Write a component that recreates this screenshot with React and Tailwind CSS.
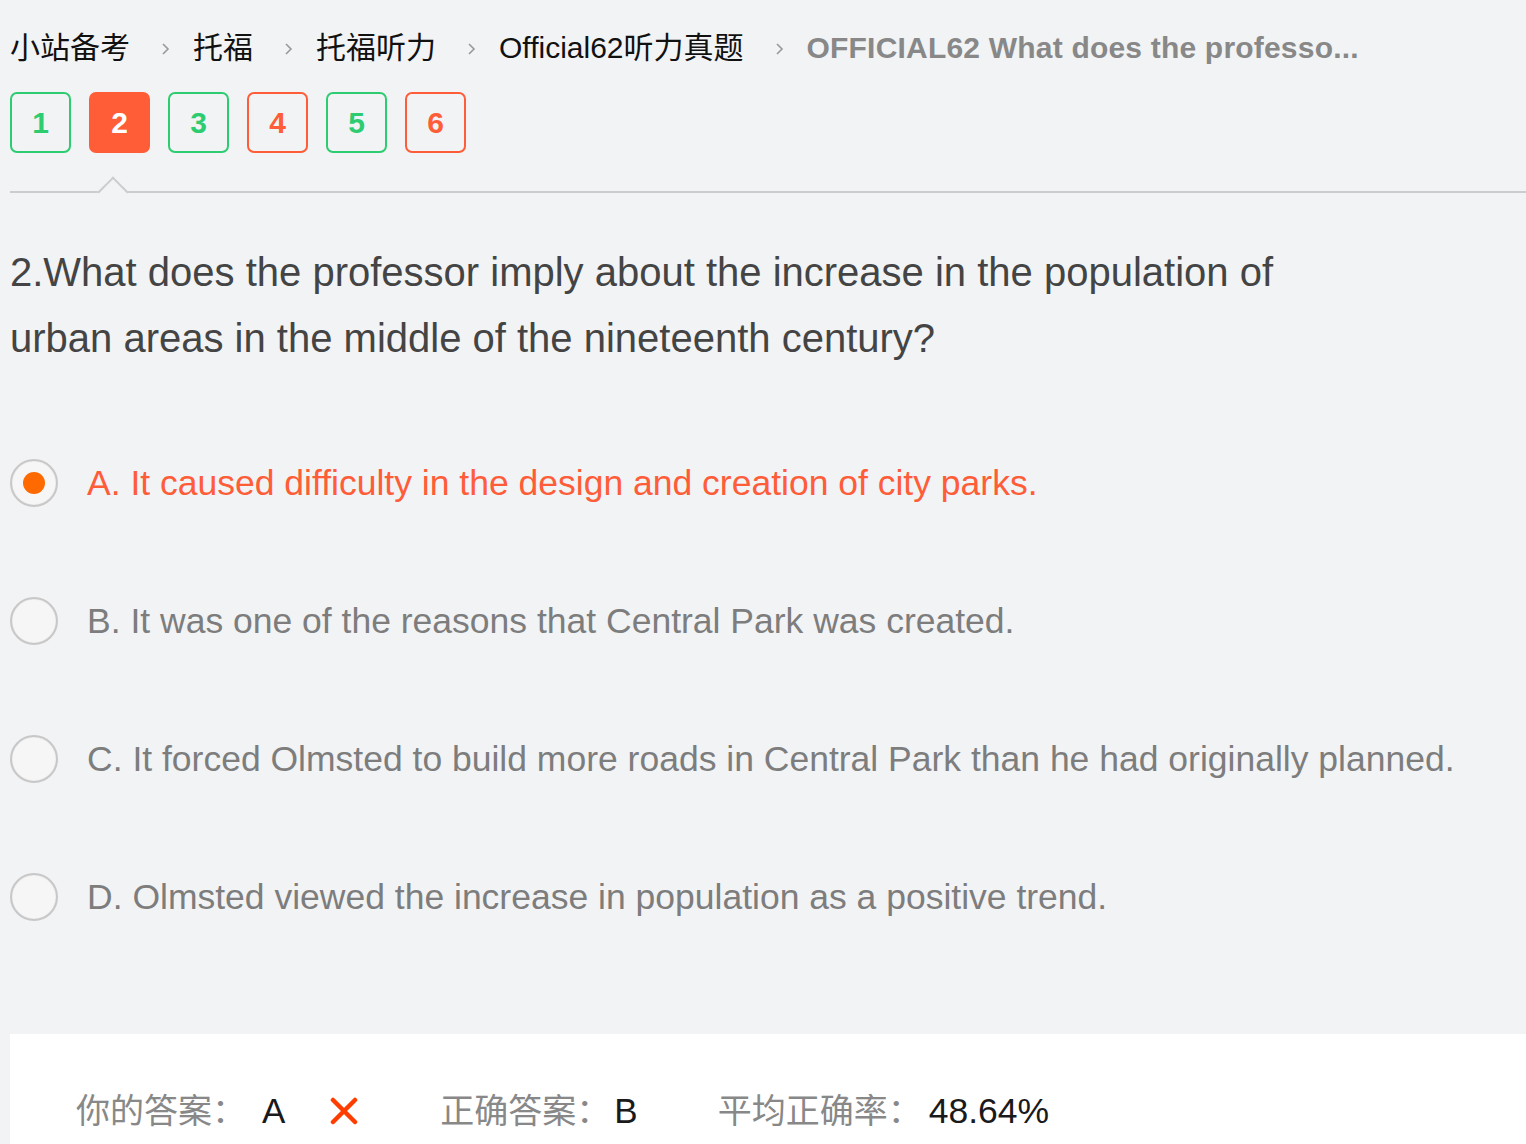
import React from "react";

const crumbs = ["小站备考", "托福", "托福听力", "Official62听力真题"];

const nums = [
  { n: 1, ok: true },
  { n: 2, ok: false, active: true },
  { n: 3, ok: true },
  { n: 4, ok: false },
  { n: 5, ok: true },
  { n: 6, ok: false },
];

const options = [
  { key: "A", text: "It caused difficulty in the design and creation of city parks.", checked: true },
  { key: "B", text: "It was one of the reasons that Central Park was created." },
  { key: "C", text: "It forced Olmsted to build more roads in Central Park than he had originally planned." },
  { key: "D", text: "Olmsted viewed the increase in population as a positive trend." },
];

const Chevron = () => (
  <svg width="10" height="14" viewBox="0 0 10 14" className="ml-[31px] mr-[22px] mt-[4px]">
    <path d="M2 2 L7 7 L2 12" fill="none" stroke="#999" strokeWidth="1.6" />
  </svg>
);

const App = () => {
  return (
    <div className="min-h-screen bg-[#f2f3f5] pl-[10px] font-['Liberation_Sans','Noto_Sans_CJK_SC',sans-serif] overflow-hidden">
      <div className="mt-[28px] h-[38px] flex items-center whitespace-nowrap text-[30px]">
        {crumbs.map((c, i) => (
          <React.Fragment key={i}>
            <span className="text-[#111]">{c}</span>
            <Chevron />
          </React.Fragment>
        ))}
        <span className="text-[#888] font-bold tracking-[0.2px]">OFFICIAL62 What does the professo...</span>
      </div>

      <div className="mt-[26px] flex gap-[18px]">
        {nums.map((b) => (
          <div
            key={b.n}
            className={
              b.active
                ? "w-[61px] h-[61px] rounded-[7px] bg-[#ff5c38] text-white flex items-center justify-center text-[30px] font-bold"
                : b.ok
                ? "w-[61px] h-[61px] rounded-[7px] border-2 border-[#2ecc71] text-[#2ecc71] flex items-center justify-center text-[30px] font-bold"
                : "w-[61px] h-[61px] rounded-[7px] border-2 border-[#ff5c38] text-[#ff5c38] flex items-center justify-center text-[30px] font-bold"
            }
          >
            {b.n}
          </div>
        ))}
      </div>

      <div className="relative mt-[38px] border-t-2 border-[#cccccc]">
        <div className="absolute left-[92px] top-[-12px] w-[22px] h-[22px] rotate-45 bg-[#f2f3f5] border-l-2 border-t-2 border-[#cccccc]" />
      </div>

      <div className="mt-[46px] text-[40px] leading-[66px] text-[#444] max-w-[1330px]">
        2.What does the professor imply about the increase in the population of urban areas in the middle of the nineteenth century?
      </div>

      <div className="mt-[88px] flex flex-col gap-[90px]">
        {options.map((o) => (
          <div key={o.key} className="flex items-center h-[48px] whitespace-nowrap">
            <div className="w-[48px] h-[48px] rounded-full border-2 border-[#c8c8c8] bg-[#f6f6f6] shadow-[inset_0_0_1px_rgba(0,0,0,0.2)] flex items-center justify-center shrink-0">
              {o.checked && <div className="w-[22px] h-[22px] rounded-full bg-[#ff6a00]" />}
            </div>
            <span className={o.checked ? "ml-[29px] mt-[2px] text-[35.5px] text-[#ff5c38]" : "ml-[29px] mt-[2px] text-[35.5px] text-[#7d7d7d]"}>
              {o.key}. {o.text}
            </span>
          </div>
        ))}
      </div>

      <div className="mt-[113px] bg-white pl-[66px] pt-[57px] h-[200px] flex items-start whitespace-nowrap text-[34px] leading-[40px]">
        <span className="text-[#888]">你的答案：</span>
        <span className="ml-[16px] text-[35px] text-[#1a1a1a]">A</span>
        <svg width="28" height="28" viewBox="0 0 28 28" className="ml-[45px] mt-[6px]">
          <path d="M3 3 L25 25 M25 3 L3 25" stroke="#ff3d00" strokeWidth="4.5" strokeLinecap="round" />
        </svg>
        <span className="ml-[82px] text-[#888]">正确答案：</span>
        <span className="ml-[4px] text-[35px] text-[#1a1a1a]">B</span>
        <span className="ml-[80px] text-[#888]">平均正确率：</span>
        <span className="ml-[7px] text-[35.5px] text-[#1a1a1a]">48.64%</span>
      </div>
    </div>
  );
};

export default App;
